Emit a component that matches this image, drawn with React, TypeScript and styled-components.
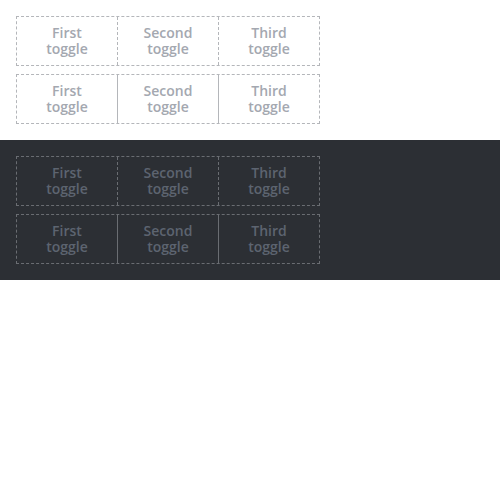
import styled, { createGlobalStyle } from "styled-components";

const GlobalStyle = createGlobalStyle`
  body {
    margin: 0;
    background: #ffffff;
    font-family: "Open Sans", "Noto Sans", sans-serif;
  }
`;

const Section = styled.section<{ $dark?: boolean }>`
  background: ${({ $dark }) => ($dark ? "#2c2f34" : "#ffffff")};
  padding: 16px;
  display: flex;
  flex-direction: column;
  gap: 8px;
`;

const Group = styled.div<{ $dark?: boolean }>`
  display: flex;
  width: 304px;
  height: 50px;
  box-sizing: border-box;
  border: 1px dashed ${({ $dark }) => ($dark ? "#6a6d72" : "#b4b6ba")};
`;

const Toggle = styled.button<{ $dark?: boolean; $solid?: boolean; $first?: boolean }>`
  flex: 1;
  margin: 0;
  padding: 0 8px;
  background: transparent;
  border: none;
  border-left: ${({ $first, $solid, $dark }) =>
    $first
      ? "none"
      : `1px ${$solid ? "solid" : "dashed"} ${$dark ? "#6a6d72" : "#b4b6ba"}`};
  font-family: "Open Sans", "Noto Sans", sans-serif;
  font-weight: 600;
  font-size: 14px;
  line-height: 16px;
  color: ${({ $dark }) => ($dark ? "#5d6470" : "#a4a8b0")};
  cursor: pointer;
`;

const labels = [
  ["First", "toggle"],
  ["Second", "toggle"],
  ["Third", "toggle"],
];

function ToggleGroup({ dark, solid }: { dark?: boolean; solid?: boolean }) {
  return (
    <Group $dark={dark}>
      {labels.map(([a, b], i) => (
        <Toggle key={a} $dark={dark} $solid={solid} $first={i === 0}>
          {a}
          <br />
          {b}
        </Toggle>
      ))}
    </Group>
  );
}

export default function App() {
  return (
    <>
      <GlobalStyle />
      <Section>
        <ToggleGroup />
        <ToggleGroup solid />
      </Section>
      <Section $dark>
        <ToggleGroup dark />
        <ToggleGroup dark solid />
      </Section>
    </>
  );
}
